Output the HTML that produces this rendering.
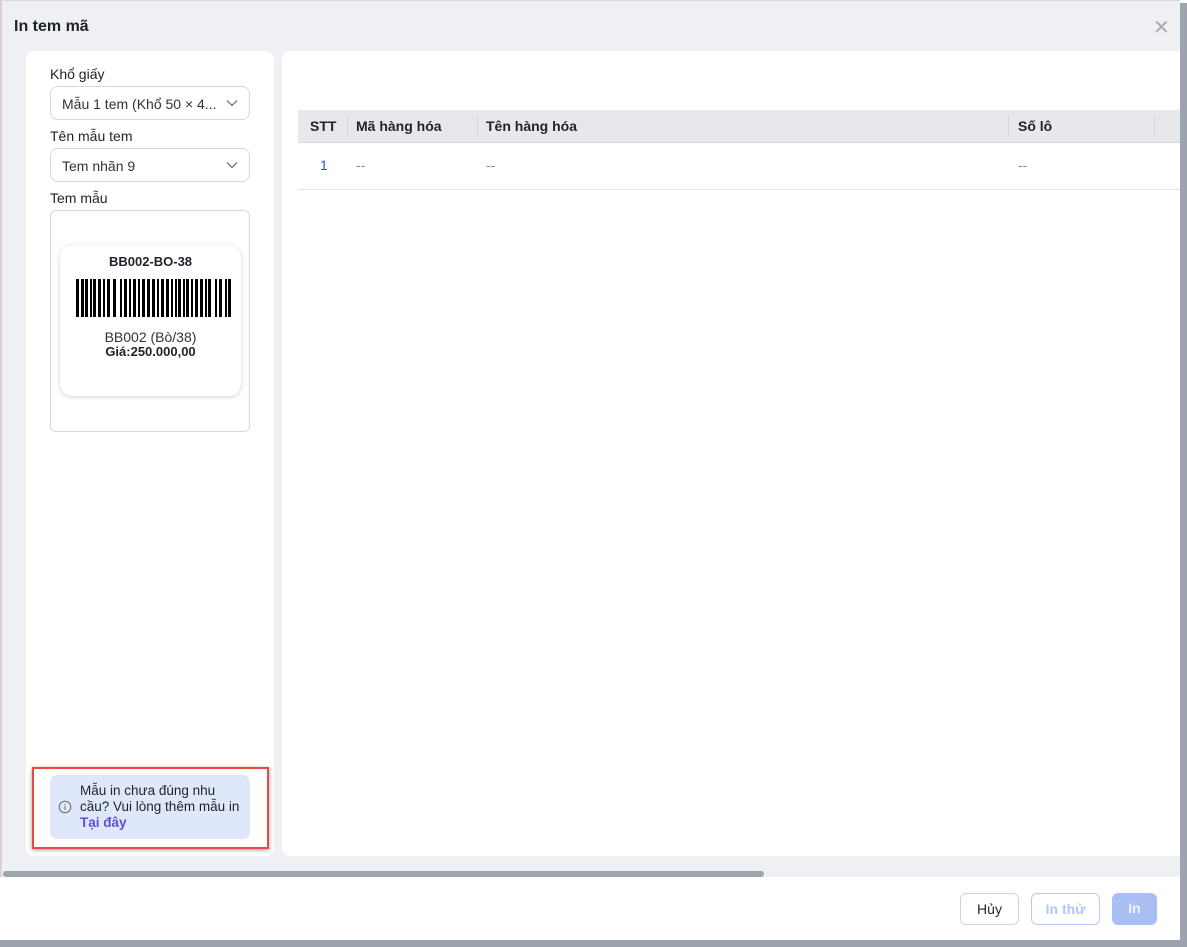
<!DOCTYPE html>
<html><head><meta charset="utf-8">
<style>
*{box-sizing:border-box;margin:0;padding:0}
body{width:1187px;height:947px;overflow:hidden;background:#fff;font-family:"Liberation Sans",sans-serif;color:#1f2329;position:relative}
.dlg{position:absolute;left:0;top:0;width:1180px;height:877px;background:#eef0f4;border-top:1px solid #e5d5d8}
.title{position:absolute;left:14px;top:17px;font-size:16px;font-weight:bold;color:#1f2329}
.close{position:absolute;left:1153px;top:14px;font-size:20px;color:#aaa}
.left{position:absolute;left:26px;top:50px;width:248px;height:805px;background:#fff;border-radius:8px}
.lbl{position:absolute;left:50px;font-size:14px;color:#1f2329}
.sel{position:absolute;left:50px;width:200px;height:34px;border:1px solid #d5d8de;border-radius:8px;font-size:14px;padding:9px 0 0 11px;color:#333}
.sel svg{position:absolute;right:11px;top:12px}
.box{position:absolute;left:50px;top:210px;width:200px;height:222px;border:1px solid #d5d8de;border-radius:6px}
.card{position:absolute;left:60px;top:245px;width:181px;height:151px;border-radius:12px;background:#fff;box-shadow:0 1px 5px rgba(0,0,0,.18)}
.notice{position:absolute;left:50px;top:775px;width:200px;height:64px;background:#dfe8fb;border-radius:7px;font-size:13.5px;line-height:16px;padding:8px 0 0 30px;color:#1f2329}
.red{position:absolute;left:32px;top:767px;width:237px;height:82px;border:2px solid #f04646;box-shadow:0 1px 4px rgba(0,0,0,.4)}
.right{position:absolute;left:282px;top:50px;width:898px;height:805px;background:#fff;border-radius:8px 0 0 8px}
.th{position:absolute;top:110px;left:298px;width:882px;height:33px;background:#e6e8ec;border-bottom:1px solid #d8dbe0;font-size:14px;font-weight:bold}
.th span{position:absolute;top:8px}
.sep{position:absolute;top:6px;width:1px;height:20px;background:#d4d6da}
.row{position:absolute;top:143px;left:298px;width:882px;height:47px;border-bottom:1px solid #e2e4e8;font-size:14px;color:#888}
.row span{position:absolute;top:14px}
.footer{position:absolute;left:0;top:877px;width:1180px;height:63px;background:#fff}
.btn{position:absolute;top:893px;height:32px;border-radius:6px;font-size:14px;text-align:center;line-height:30px}
</style></head><body>
<div class="dlg">
<div class="title">In tem mã</div>
<div class="close">✕</div>
<div class="left"></div>
<div class="right"></div>
</div>
<div style="position:absolute;left:0;top:0;width:2px;height:940px;background:#d8d0d4"></div>
<div class="lbl" style="top:66px">Khổ giấy</div>
<div class="sel" style="top:86px">Mẫu 1 tem (Khổ 50 × 4...<svg width="12" height="8" viewBox="0 0 12 8"><path d="M1 1.5L6 6.5L11 1.5" fill="none" stroke="#666" stroke-width="1.2"/></svg></div>
<div class="lbl" style="top:128px">Tên mẫu tem</div>
<div class="sel" style="top:148px">Tem nhãn 9<svg width="12" height="8" viewBox="0 0 12 8"><path d="M1 1.5L6 6.5L11 1.5" fill="none" stroke="#666" stroke-width="1.2"/></svg></div>
<div class="lbl" style="top:190px">Tem mẫu</div>
<div class="box"></div>
<div class="card">
<div style="position:absolute;top:9px;width:100%;text-align:center;font-size:13px;font-weight:bold">BB002-BO-38</div>
<svg style="position:absolute;left:16px;top:34px" width="157" height="38" viewBox="0 0 157 38">
<g fill="#000">
<rect x="0" width="3" height="38"/><rect x="5" width="3" height="38"/><rect x="9" width="3" height="38"/><rect x="14" width="2" height="38"/><rect x="17" width="3" height="38"/><rect x="22" width="3" height="38"/><rect x="27" width="2" height="38"/><rect x="31" width="3" height="38"/><rect x="37" width="3" height="38"/><rect x="44" width="2" height="38"/><rect x="48" width="3" height="38"/><rect x="53" width="2" height="38"/><rect x="57" width="3" height="38"/><rect x="62" width="2" height="38"/><rect x="66" width="3" height="38"/><rect x="71" width="3" height="38"/><rect x="76" width="3" height="38"/><rect x="81" width="2" height="38"/><rect x="85" width="3" height="38"/><rect x="90" width="3" height="38"/><rect x="95" width="2" height="38"/><rect x="99" width="2" height="38"/><rect x="102" width="3" height="38"/><rect x="107" width="2" height="38"/><rect x="110" width="3" height="38"/><rect x="115" width="2" height="38"/><rect x="119" width="3" height="38"/><rect x="124" width="3" height="38"/><rect x="129" width="2" height="38"/><rect x="132" width="3" height="38"/><rect x="139" width="2" height="38"/><rect x="143" width="3" height="38"/><rect x="149" width="2" height="38"/><rect x="152" width="3" height="38"/>
</g></svg>
<div style="position:absolute;top:84px;width:100%;text-align:center;font-size:14px;color:#333">BB002 (Bò/38)</div>
<div style="position:absolute;top:99px;width:100%;text-align:center;font-size:13px;font-weight:bold">Giá:250.000,00</div>
</div>
<div class="notice">
<svg style="position:absolute;left:8px;top:25px" width="14" height="14" viewBox="0 0 14 14"><circle cx="7" cy="7" r="5.8" fill="none" stroke="#666" stroke-width="1"/><rect x="6.5" y="6" width="1" height="4" fill="#666"/><rect x="6.5" y="4" width="1" height="1" fill="#666"/></svg>
Mẫu in chưa đúng nhu<br>cầu? Vui lòng thêm mẫu in<br><span style="color:#5a4fd6;font-weight:bold">Tại đây</span></div>
<div class="red"></div>
<div class="th">
<span style="left:12px">STT</span><div class="sep" style="left:49px"></div>
<span style="left:58px">Mã hàng hóa</span><div class="sep" style="left:179px"></div>
<span style="left:188px">Tên hàng hóa</span><div class="sep" style="left:710px"></div>
<span style="left:720px">Số lô</span><div class="sep" style="left:856px"></div>
</div>
<div class="row"><span style="left:22px;color:#2b5fb0">1</span><span style="left:58px">--</span><span style="left:188px">--</span><span style="left:720px">--</span></div>
<div style="position:absolute;left:3px;top:871px;width:761px;height:6px;background:#9ea4ae;border-radius:3px"></div>
<div class="footer"></div>
<div class="btn" style="left:960px;width:59px;border:1px solid #d2d4d8;color:#1f2329">Hủy</div>
<div class="btn" style="left:1031px;width:69px;border:1px solid #b8c8f6;color:#b5c4f4;font-weight:bold">In thử</div>
<div class="btn" style="left:1112px;width:45px;background:#a9bff4;color:#eef3fe;font-weight:bold">In</div>
<div style="position:absolute;left:0;top:940px;width:1187px;height:7px;background:#9ea4ae"></div>
<div style="position:absolute;left:1180px;top:3px;width:7px;height:940px;background:#9ea4ae"></div>
</body></html>
